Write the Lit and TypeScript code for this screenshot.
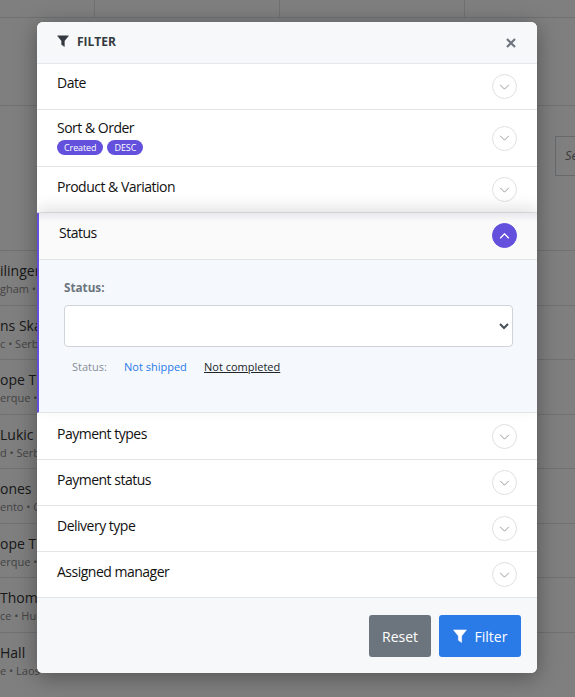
import { LitElement, html, css, svg } from 'lit';
import { customElement } from 'lit/decorators.js';

// only the part of each row that shows beside the modal
const rows = [
  { name: 'ilinger', sub: 'gham • C' },
  { name: 'ns Ska', sub: 'c • Serb' },
  { name: 'ope Tho', sub: 'erque •' },
  { name: 'Lukic', sub: 'd • Serb' },
  { name: 'ones', sub: 'ento • C' },
  { name: 'ope Tho', sub: 'erque •' },
  { name: 'Thomp', sub: 'ce • Hun' },
  { name: 'Hall', sub: 'e • Laos' },
];

const funnel = svg`<path d="M.6 1h12.8L8.6 7v6.4L5.4 11.2V7z" fill="currentColor" stroke="currentColor" stroke-width=".6" stroke-linejoin="round"/>`;

@customElement('app-root')
export class AppRoot extends LitElement {
  static styles = css`
    :host {
      display: block;
      position: relative;
      width: 575px;
      height: 697px;
      overflow: hidden;
      font-family: 'Open Sans', sans-serif;
      background: #fff;
      color: #212529;
    }
    .page { height: 697px; overflow: hidden; }
    .tabs {
      display: grid;
      grid-template-columns: 95px 185px 185px 110px;
      height: 18px;
      border-bottom: 1px solid #dee2e6;
      box-sizing: border-box;
    }
    .tabs div { border-right: 1px solid #dee2e6; }
    .gap { height: 87px; border-bottom: 1px solid #dee2e6; box-sizing: content-box; }
    .tools { height: 144px; display: flex; justify-content: flex-end; padding-top: 30px; box-sizing: border-box; }
    .search {
      width: 20px;
      height: 40px;
      border: 1px solid #ced4da;
      border-right: 0;
      box-sizing: border-box;
      padding: 9px 0 0 9px;
      font-size: 13px;
      font-style: italic;
      color: #777;
    }
    .row {
      height: 54.5px;
      border-top: 1px solid #dee2e6;
      box-sizing: border-box;
      padding-top: 10px;
      white-space: nowrap;
    }
    .row .name { font-size: 14px; line-height: 19px; color: #333; }
    .row .sub { font-size: 11px; line-height: 18px; color: #888; }

    .overlay {
      position: absolute;
      inset: 0;
      background: rgba(0, 0, 0, 0.5);
      padding: 22px 38px 0 37px;
      box-sizing: border-box;
    }
    .modal {
      height: 651px;
      background: #fff;
      border-radius: 6px;
      box-shadow: 0 4px 22px rgba(0, 0, 0, 0.35);
      overflow: hidden;
      display: flex;
      flex-direction: column;
    }
    .head {
      height: 42px;
      box-sizing: border-box;
      flex: none;
      background: #f7f8fa;
      border-bottom: 1px solid #e6e8eb;
      display: flex;
      align-items: center;
      padding: 0 21px 3px 20px;
      font-size: 12px;
      font-weight: 700;
      color: #343a40;
      gap: 8px;
    }
    .head span { flex: 1; }
    .head svg { display: block; }
    .close { color: #6c757d; margin-top: 3px; }

    .item { border-bottom: 1px solid #e2e4e6; flex: none; }
    .bar {
      display: flex;
      align-items: center;
      justify-content: space-between;
      padding: 10px 20px;
    }
    .title { align-self: flex-start; font-size: 14px; line-height: 20px; letter-spacing: -0.5px; color: #111; }
    .title.tagged { margin-top: -2px; }
    .head + .item .title { margin-top: -1px; }
    .tags { display: flex; gap: 4px; height: 16px; margin-top: 2px; }
    .tag {
      background: #6350dd;
      color: #fff;
      font-size: 9px;
      line-height: 15px;
      height: 15px;
      padding: 0 7px;
      border-radius: 8px;
      letter-spacing: -0.1px;
    }
    .circle {
      width: 25px;
      height: 25px;
      box-sizing: border-box;
      border: 1px solid #e0e0e0;
      border-radius: 50%;
      display: flex;
      align-items: center;
      justify-content: center;
      color: #8a8a92;
      flex: none;
    }
    .open {
      position: relative;
      background: #f5f9fd;
      border-left: 2px solid #6350dd;
      box-shadow: 0 -6px 14px rgba(0, 0, 0, 0.11);
    }
    .open .bar {
      background: linear-gradient(#e9e9ee, #fafafa 9px);
      border-bottom: 1px solid #e2e4e6;
      padding: 10px 20px 11px 20px;
    }
    .open + .item .bar { padding-top: 11px; }
    .open .circle { background: #6350dd; border-color: #6350dd; color: #fff; }
    .panel { height: 152px; box-sizing: border-box; padding: 19px 24px 0 25px; }
    .panel label { display: block; font-size: 11.7px; font-weight: 700; line-height: 17px; color: #6c757d; }
    select {
      display: block;
      width: 449px;
      height: 42px;
      margin-top: 9px;
      background-color: #fff;
      border: 1px solid #ced4da;
      border-radius: 4px;
      font-family: inherit;
      font-size: 14px;
      color: #495057;
    }
    .quick { display: flex; padding: 12px 0 0 8px; font-size: 11px; line-height: 16px; }
    .quick .lbl { width: 52px; color: #888e96; }
    .quick a { color: #2a7ae8; width: 80px; }
    .quick a.on { color: #212529; text-decoration: underline; width: auto; }

    .foot {
      flex: 1;
      background: #f7f8fa;
      display: flex;
      justify-content: flex-end;
      gap: 8px;
      padding: 17px 16px 0 0;
    }
    .foot button {
      height: 42px;
      border: 0;
      border-radius: 3px;
      color: #fff;
      font-family: inherit;
      font-size: 14px;
      display: flex;
      align-items: center;
      justify-content: center;
      gap: 8px;
      padding: 0;
    }
    .reset { width: 62px; background: #6c757d; }
    .apply { width: 82px; background: #2a7ae8; }
  `;

  private chevron(up = false) {
    return html`<svg width="11" height="6" viewBox="0 0 12 7" fill="none" stroke="currentColor"
      stroke-width="${up ? 1.6 : 1}"><path d="${up ? 'M1 6l5-5 5 5' : 'M1 1l5 5 5-5'}"/></svg>`;
  }

  private item(title: string, tags: string[] = []) {
    return html`<div class="item">
      <div class="bar">
        <div class="title ${tags.length ? 'tagged' : ''}">${title}
          ${tags.length ? html`<div class="tags">${tags.map((t) => html`<span class="tag">${t}</span>`)}</div>` : ''}
        </div>
        <div class="circle">${this.chevron()}</div>
      </div>
    </div>`;
  }

  render() {
    return html`
      <div class="page">
        <div class="tabs"><div></div><div></div><div></div></div>
        <div class="gap"></div>
        <div class="tools"><div class="search">Se</div></div>
        ${rows.map((r) => html`<div class="row">
          <div class="name">${r.name}</div>
          <div class="sub">${r.sub}</div>
        </div>`)}
      </div>
      <div class="overlay">
        <div class="modal">
          <div class="head">
            <svg width="12" height="12" viewBox="0 0 14 14">${funnel}</svg>
            <span>FILTER</span>
            <svg class="close" width="10" height="10" viewBox="0 0 10 10" fill="none" stroke="currentColor" stroke-width="2.2"><path d="M1 1l8 8M9 1l-8 8"/></svg>
          </div>
          ${this.item('Date')}
          ${this.item('Sort & Order', ['Created', 'DESC'])}
          ${this.item('Product & Variation')}
          <div class="item open">
            <div class="bar">
              <div class="title">Status</div>
              <div class="circle">${this.chevron(true)}</div>
            </div>
            <div class="panel">
              <label>Status:</label>
              <select><option></option></select>
              <div class="quick">
                <span class="lbl">Status:</span>
                <a>Not shipped</a>
                <a class="on">Not completed</a>
              </div>
            </div>
          </div>
          ${this.item('Payment types')}
          ${this.item('Payment status')}
          ${this.item('Delivery type')}
          ${this.item('Assigned manager')}
          <div class="foot">
            <button class="reset">Reset</button>
            <button class="apply">
              <svg width="14" height="14" viewBox="0 0 14 14">${funnel}</svg>
              Filter
            </button>
          </div>
        </div>
      </div>
    `;
  }
}
